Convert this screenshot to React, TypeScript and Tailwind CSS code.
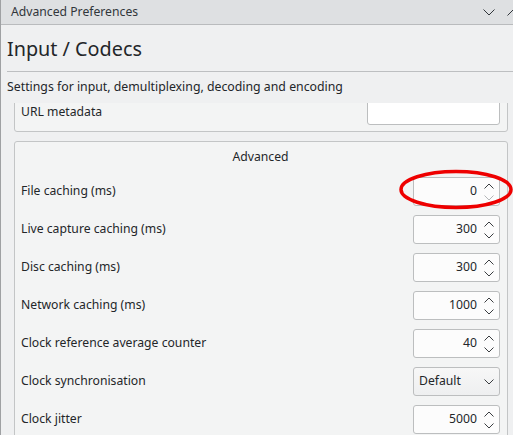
import React from "react";

const font = { fontFamily: '"Noto Sans", "Open Sans", sans-serif' };

function Chevron({ dir, light }: { dir: "up" | "down"; light?: boolean }) {
  return (
    <svg width="10" height="6" viewBox="0 0 10 6" className="block">
      <path
        d={dir === "up" ? "M0.5 5.5 L5 1 L9.5 5.5" : "M0.5 0.5 L5 5 L9.5 0.5"}
        fill="none"
        stroke={light ? "#b4b6b8" : "#3b3e41"}
        strokeWidth="1"
      />
    </svg>
  );
}

function SpinBox({ value, atMin }: { value: string; atMin?: boolean }) {
  return (
    <div className="flex h-[29px] w-[87px] items-center rounded-[3px] border border-[#bcbebf] bg-[#fcfcfc] pr-[5px]">
      <span className="flex-1 text-right text-[12.2px] text-[#232629]">{value}</span>
      <div className="ml-[7px] flex flex-col gap-[6px]">
        <Chevron dir="up" />
        <Chevron dir="down" light={atMin} />
      </div>
    </div>
  );
}

function Combo({ value }: { value: string }) {
  return (
    <div className="flex h-[29px] w-[87px] items-center rounded-[3px] border border-[#bcbebf] bg-gradient-to-b from-[#f7f7f7] to-[#eeeff0] pl-[5px] pr-[5px]">
      <span className="flex-1 text-[12.2px] text-[#232629]">{value}</span>
      <Chevron dir="down" />
    </div>
  );
}

const rows: { label: string; value: string; kind: "spin" | "combo"; atMin?: boolean }[] = [
  { label: "File caching (ms)", value: "0", kind: "spin", atMin: true },
  { label: "Live capture caching (ms)", value: "300", kind: "spin" },
  { label: "Disc caching (ms)", value: "300", kind: "spin" },
  { label: "Network caching (ms)", value: "1000", kind: "spin" },
  { label: "Clock reference average counter", value: "40", kind: "spin" },
  { label: "Clock synchronisation", value: "Default", kind: "combo" },
  { label: "Clock jitter", value: "5000", kind: "spin" },
];

export default function App() {
  return (
    <div
      className="relative h-[435px] w-[513px] overflow-hidden border-l border-[#9fa1a3] bg-[#eff0f1] text-[#232629]"
      style={font}
    >
      {/* title bar */}
      <div className="flex h-[25px] items-center border-b border-[#b9bbbd] bg-[#dee0e2] pl-[10px]">
        <span className="flex-1 text-[12.2px] text-[#31363b]">Advanced Preferences</span>
        <div className="-mr-[6px] flex items-center gap-[12px]">
          <svg width="12" height="7" viewBox="0 0 12 7">
            <path d="M0.5 0.5 L6 6 L11.5 0.5" fill="none" stroke="#31363b" strokeWidth="1" />
          </svg>
          <svg width="12" height="7" viewBox="0 0 12 7">
            <path d="M0.5 6.5 L6 1 L11.5 6.5" fill="none" stroke="#31363b" strokeWidth="1" />
          </svg>
        </div>
      </div>

      {/* header */}
      <div className="pl-[6px]">
        <div className="flex h-[46px] items-center pt-[1px] text-[19.8px] leading-none text-[#232629]">
          Input / Codecs
        </div>
        <div className="h-px bg-[#bdbfc1]" />
        <div className="flex h-[31px] items-center text-[12.3px]">
          Settings for input, demultiplexing, decoding and encoding
        </div>
      </div>

      {/* scroll area */}
      <div className="h-[332px] overflow-hidden pl-[13px] pr-[5px]">
        <div className="-mt-[10px] flex flex-col gap-[9px]">
          <div className="flex h-[39px] items-end rounded-[3px] border border-[#c3c5c6] bg-[#f3f4f4] pb-[6px] pl-[6px] pr-[7px]">
            <span className="flex-1 self-center pt-[6px] text-[12.2px]">URL metadata</span>
            <div className="h-[31px] w-[133px] rounded-[3px] border border-[#bcbebf] bg-white" />
          </div>

          <div className="rounded-[3px] border border-[#c3c5c6] bg-[#f3f4f4] pl-[6px] pr-[7px]">
            <div className="flex h-[24px] items-end justify-center text-[12.2px]">Advanced</div>
            <div className="mt-[11px] flex flex-col gap-[9px]">
              {rows.map((r) => (
                <div key={r.label} className="flex h-[29px] items-center">
                  <span className="flex-1 text-[12.2px]">{r.label}</span>
                  {r.kind === "spin" ? (
                    <SpinBox value={r.value} atMin={r.atMin} />
                  ) : (
                    <Combo value={r.value} />
                  )}
                </div>
              ))}
            </div>
            <div className="h-[20px]" />
          </div>
        </div>
      </div>

      {/* red annotation ellipse */}
      <svg
        className="pointer-events-none absolute left-[398px] top-[169px]"
        width="116"
        height="41"
        viewBox="0 0 116 41"
      >
        <ellipse cx="57" cy="20.5" rx="55" ry="18" fill="none" stroke="#ee0000" strokeWidth="3.5" />
      </svg>
    </div>
  );
}
